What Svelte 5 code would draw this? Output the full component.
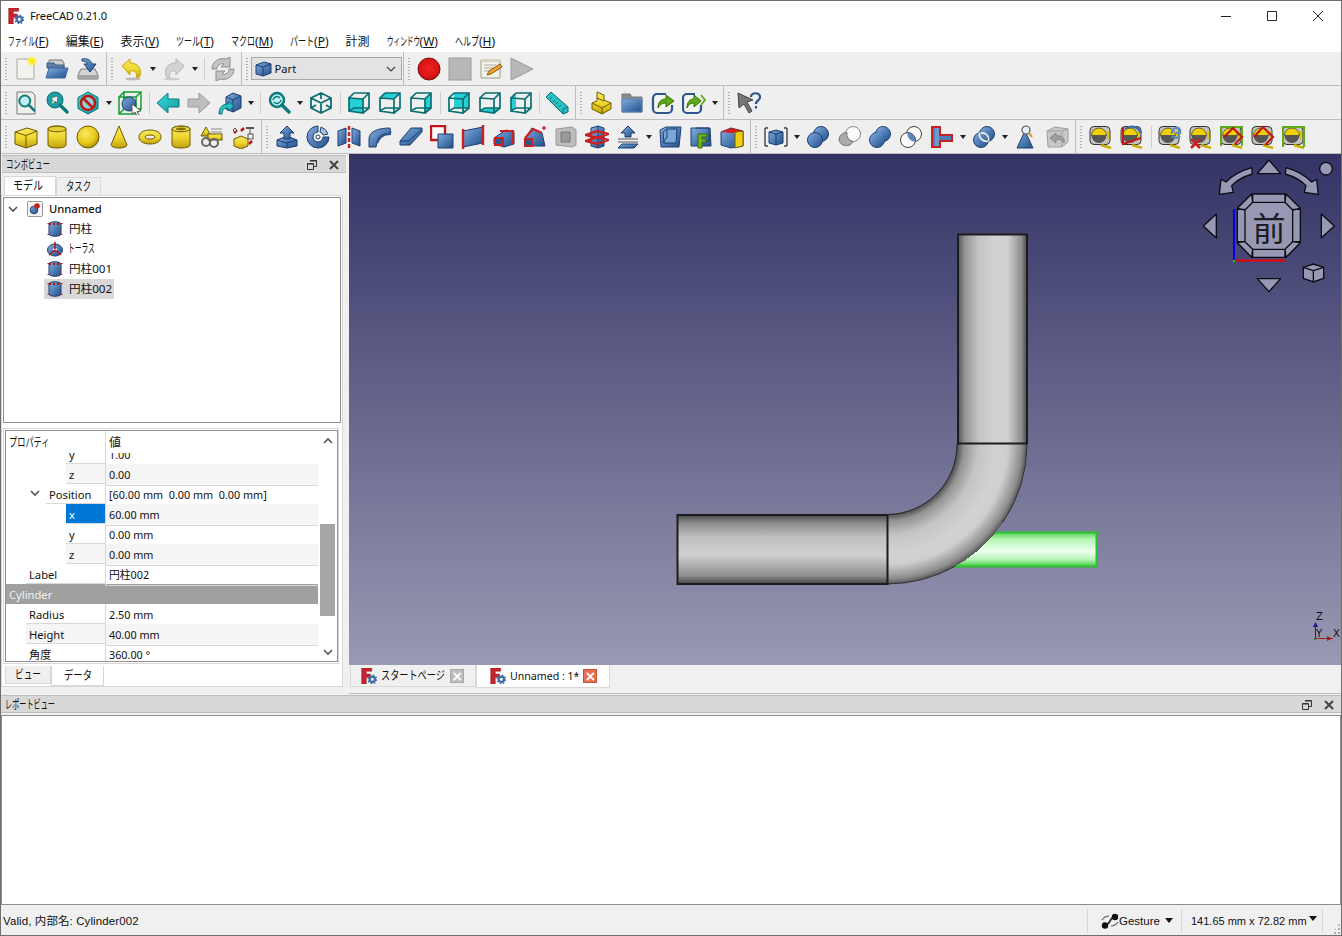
<script>
	// shared paint strings for the toolbar icons
	const ys = 'fill="url(#gy)" stroke="#6e5c00"';
	const bs = 'fill="url(#gb)" stroke="#1d3f72"';

	const logo = '<path d="M1 0h15v5H8v4h6v5H8v10H1z" fill="#c8232c" stroke="#7a1015" stroke-width=".6"/><circle cx="17" cy="17" r="4" fill="none" stroke="#3d6ea8" stroke-width="3.400"/><circle cx="17" cy="17" r="6.400" fill="none" stroke="#3d6ea8" stroke-width="2" stroke-dasharray="2.400 2.600"/>';

	const wire = (face) => `${face ? `<path d="${face}" fill="#26d0d4"/>` : ''}<path d="M2 7l14 1v14L2 20zM7 2h15v15l-6 5M2 7l5-5M16 8l6-6M2 20l5-3h15" fill="none" stroke="#0b6e70" stroke-width="1.700"/>`;
	const mag = '<circle cx="10" cy="9" r="7" fill="#bfeef0" stroke="#0b7a7e" stroke-width="2.400"/><path d="M15 14l7 7" stroke="#0b7a7e" stroke-width="3.400" stroke-linecap="round"/>';
	const tape = '<rect x="1" y="1.500" width="20" height="18" rx="4" fill="#c4c4bc" stroke="#333"/><path d="M2.500 10.500a7.500 7.500 0 0 1 15 0z" fill="#f0d000" stroke="#333" stroke-width=".7"/><path d="M2.500 10.500a7.500 7.500 0 0 0 15 0z" fill="#555"/><rect x="18" y="6" width="2" height="8" fill="#e3c400"/><path d="M12 20l10 3" stroke="#c9ad00" stroke-width="2.400"/>';
	const spheres = (a, b) => `<circle cx="15" cy="9" r="7.500" ${a}/><circle cx="9" cy="15" r="7.500" ${b}/>`;

	const icons = {
		new: '<path d="M3 2h17v20H3z" fill="#f2f2ee" stroke="#a8a8a0"/><circle cx="18" cy="4" r="4.600" fill="#fff34a" opacity=".75"/><circle cx="18" cy="4" r="2.600" fill="#ffe81a"/>',
		open: '<path d="M4 3h13l2 3v6H4z" fill="#cfcfcf" stroke="#777"/><path d="M2 6h7l2 2h8v3H2z" fill="#5c7ea8" stroke="#3e5e86"/><path d="M4 11h19l-3 10H1z" fill="url(#gb)" stroke="#39679f"/>',
		save: '<path d="M5 12L2 18v4h20v-4l-3-6z" fill="#d4d4d4" stroke="#777"/><rect x="3" y="18" width="18" height="3" fill="#a4a4a4"/><path d="M6 2c5-1 9 1 10 5h4l-6 8-6-8h4c-1-2-3-3-6-3z" fill="url(#gb)" stroke="#1d3f72"/>',
		undo: '<path d="M2 9l8-7v4c7 0 12 4 10 13-1 2-3 3-4 3 2-6-1-9-6-8v4z" fill="url(#gy)" stroke="#c9a600"/><ellipse cx="13" cy="22" rx="8" ry="1.400" fill="#bbb"/>',
		redo: '<path d="M22 9l-8-7v4C7 6 2 10 4 19c1 2 3 3 4 3-2-6 1-9 6-8v4z" fill="#d4d4d4" stroke="#b4b4b4"/><ellipse cx="10" cy="22" rx="8" ry="1.400" fill="#ccc"/>',
		refresh: '<path d="M1 12C1 5 8 0 15 2l4-2v10h-9l3-3c-4-1-7 1-7 5zM23 12c0 7-7 12-14 10l-4 2V14h9l-3 3c4 1 7-1 7-5z" fill="#c4c4c4" stroke="#8c8c8c"/>',
		record: '<circle cx="12" cy="12" r="11" fill="url(#gr)" stroke="#7d1010"/>',
		stop: '<rect x="1" y="1" width="22" height="22" fill="#b8b8b8" stroke="#9a9a9a"/>',
		macro: '<path d="M2 3h19v18H2z" fill="#f4f2e2" stroke="#999"/><path d="M2 2h19v3H2z" fill="#d8d4c0"/><path d="M5 8h12M5 11h10M5 14h7" stroke="#aaa"/><path d="M8 18l2-4 11-7 2 3-11 7z" fill="#f0a030" stroke="#8a5a10"/>',
		play: '<path d="M1 1l22 11L1 23z" fill="#b8b8b8" stroke="#999"/>',

		fitall: `<path d="M3 1h15l3 3v19H3z" fill="#f0f0ea" stroke="#777"/><g transform="translate(3 3) scale(.78)">${mag}</g>`,
		fitsel: `<circle cx="10" cy="9" r="8" fill="#1a9ea3" stroke="#0b6e70"/><path d="M15 14l7 7" stroke="#0b7a7e" stroke-width="3.400" stroke-linecap="round"/><path d="M13 5L6 7l2 2-2 3 2 1 2-3 2 2z" fill="#eee" stroke="#555" stroke-width=".6"/>`,
		draw: '<path d="M12 1l10 5.500v11L12 23 2 17.500v-11z" fill="url(#gt)" stroke="#0b6e70"/><circle cx="12" cy="12" r="7" fill="#8fd0d4" stroke="#c01818" stroke-width="2.600"/><path d="M7 7l10 10" stroke="#c01818" stroke-width="2.600"/>',
		bbox: '<path d="M1 6h17v17H1zM6 1h17v17H6zM1 6l5-5M18 6l5-5M18 23l5-5M1 23l5-5" fill="none" stroke="#15a030" stroke-width="1.500"/><circle cx="11" cy="13" r="7" fill="url(#gb)" stroke="#1d3f72"/><path d="M14 13l9 7-4 .5 2 3.500-2 .5-2-3.500-3 2z" fill="#fff" stroke="#444" stroke-width=".8"/>',
		back: '<path d="M1 12l11-10v6h11v8H12v6z" fill="url(#gt)" stroke="#0b7a7e"/>',
		fwd: '<path d="M23 12L12 2v6H1v8h11v6z" fill="#bdbdbd" stroke="#9a9a9a"/>',
		sync: '<path d="M8 6l7-4 8 3v12l-8 4-7-3z" fill="url(#gb)" stroke="#1d3f72"/><path d="M8 6l7 3 8-4M15 9v12" fill="none" stroke="#1d3f72"/><path d="M1 23c0-7 4-10 9-10V10l6 5-6 5v-3c-4 0-6 2-6 6z" fill="#28c0c4" stroke="#0b6e70"/>',
		zoomrot: `${mag}<path d="M6 9a4 4 0 0 1 7-2M14 9a4 4 0 0 1-7 2" fill="none" stroke="#0b7a7e" stroke-width="1.500"/>`,
		iso: '<path d="M12 2l10 5v10l-10 5-10-5V7zM2 7l10 5 10-5M12 12v10M12 2v6M2 17l5-3M22 17l-5-3" fill="none" stroke="#0b6e70" stroke-width="1.800"/>',
		vfront: wire('M2 7l14 1v14L2 20z'),
		vtop: wire('M2 7l5-5h15l-6 6z'),
		vright: wire('M16 8l6-6v15l-6 5z'),
		vrear: wire('M7 2h15v15H7z'),
		vbottom: wire('M2 20l5-3h15l-6 5z'),
		vleft: wire('M2 7l5-5v15l-5 3z'),
		ruler: '<path d="M1 6l5-5 17 15v5l-5 2z" fill="#28c0c4" stroke="#0b6e70"/><path d="M7 6l-2 2M10 9l-2 2M13 11l-2 2M16 14l-2 2" stroke="#0b6e70"/><path d="M18 23v-5l5-2" fill="none" stroke="#0b6e70"/>',
		pstep: '<path d="M8 1l7 3v5l7 3v6l-9 5-10-5v-6l5-2z" fill="url(#gy)" stroke="#6e5c00"/><path d="M3 12l10 5 9-5M13 17v6M8 7l7 3" fill="none" stroke="#6e5c00"/>',
		folder: '<path d="M2 3h8l2 3h10v15H2z" fill="#8d8d8d" stroke="#777"/><path d="M2 8h20v13H2z" fill="url(#gb)" stroke="#5c84b8"/>',
		link: '<path d="M15 3H6a4 4 0 0 0-4 4v11a4 4 0 0 0 4 4h11a4 4 0 0 0 4-4v-4" fill="#f4f4f4" stroke="#2c568e" stroke-width="2.200"/><path d="M7 17c0-6 3-9 8-9V4l8 6-8 6v-4c-3 0-6 1-8 5z" fill="#5eaa18" stroke="#356b08"/>',
		linksub: '<path d="M13 3H5a4 4 0 0 0-4 4v11a4 4 0 0 0 4 4h10a4 4 0 0 0 4-4v-4" fill="#f4f4f4" stroke="#2c568e" stroke-width="2.200"/><path d="M5 17c0-6 3-9 7-9V4l7 6-7 6v-4c-3 0-5 1-7 5z" fill="#5eaa18" stroke="#356b08"/><path d="M19 4l4 5-4 5" fill="none" stroke="#5eaa18" stroke-width="1.800"/>',
		help: '<path d="M1 2l15 7-6 2 5 9-3 2-5-9-5 4z" fill="#777" stroke="#444"/><path d="M14 6c0-5 9-5 9 0 0 4-4 3-4 7M19 15v2.500" fill="none" stroke="#2c568e" stroke-width="2.200"/>',

		box: `<path ${ys} d="M1 7l12-4 10 3v13l-11 4-11-4z"/><path d="M1 7l11 3.500L23 6M12 10.500V23" fill="none" stroke="#6e5c00"/>`,
		cyl: `<path ${ys} d="M3 4c0-4 18-4 18 0v16c0 4-18 4-18 0z"/><ellipse cx="12" cy="4" rx="9" ry="2.800" fill="#e8d030" stroke="#6e5c00"/>`,
		sphere: '<circle cx="12" cy="12" r="11" fill="url(#gs)" stroke="#6e5c00"/>',
		cone: '<path d="M12 1l8 19c-1 4-15 4-16 0z" fill="url(#gy)" stroke="#6e5c00"/>',
		torus: '<path fill-rule="evenodd" d="M12 5c7 0 11 3 11 7s-4 7-11 7-11-3-11-7 4-7 11-7zM12 10c-3 0-5 1-5 2s2 2 5 2 5-1 5-2-2-2-5-2z" fill="url(#gy)" stroke="#6e5c00"/>',
		tube: `<path ${ys} d="M3 4c0-4 18-4 18 0v16c0 4-18 4-18 0z"/><ellipse cx="12" cy="4" rx="9" ry="2.800" fill="#f0dc50" stroke="#6e5c00"/><ellipse cx="12" cy="4" rx="5" ry="1.400" fill="#8a7400"/>`,
		prims: '<path d="M6 2l5 9H1z" fill="url(#gy)" stroke="#6e5c00"/><path d="M11 4h11M11 7h11" stroke="#888"/><rect x="8" y="9" width="14" height="6" fill="url(#gy)" stroke="#6e5c00"/><circle cx="6" cy="17" r="4" fill="none" stroke="#666" stroke-width="2"/><circle cx="14" cy="18" r="4" fill="none" stroke="#666" stroke-width="2"/>',
		builder: '<path d="M3 14l7-3 7 3v7l-7 3-7-3z" fill="url(#gy)" stroke="#6e5c00"/><rect x="15" y="2" width="8" height="2" fill="#555"/><rect x="17" y="9" width="5" height="5" fill="#eee" stroke="#555"/><path d="M19 4v5" stroke="#555"/><path d="M3 8l3-3M13 3l-3 3M21 16l-3 3" stroke="#c01818" stroke-width="2.600"/><path d="M4 3l2 2-2 2-2-2z" fill="#ddd" stroke="#555"/>',
		extrude: `<path ${bs} d="M2 15l10-4 10 4v6l-10 2-10-2z"/><path d="M2 15l10 3 10-3M12 18v5" fill="none" stroke="#1d3f72"/><path ${bs} d="M12 1l7 7h-4v6H9V8H5z"/>`,
		revolve: '<path d="M12 1a11 11 0 1 0 11 11h-6a5 5 0 1 1-5-5z" fill="url(#gb)" stroke="#1d3f72"/><path d="M15 2a11 11 0 0 1 7 7l-5 1a5 5 0 0 0-3-3z" fill="#a8c0dc" stroke="#1d3f72"/><circle cx="12" cy="12" r="2" fill="#fff" stroke="#1d3f72"/>',
		mirror: `<path ${bs} d="M1 6l8-3v15l-8 3z"/><path ${bs} d="M23 6l-8-3v15l8 3z"/><path d="M12 1v22" stroke="#cc1f1f" stroke-width="2.400" stroke-dasharray="4 2"/>`,
		fillet: `<path ${bs} d="M1 22V13C2 6 11 3 22 3l1 5c-8 0-13 3-14 9l-1 5z"/><path d="M23 8v2c-7 0-11 3-13 9l-1-2c1-6 6-9 14-9z" fill="#2c568e"/>`,
		chamfer: `<path ${bs} d="M1 16L12 3h11v4L11 20H1z"/><path d="M1 16h9l13-12" fill="none" stroke="#1d3f72"/>`,
		face: '<path d="M1 1h14v14H1z" fill="#fff" stroke="#c01818" stroke-width="2.400"/><path d="M8 9h15v14H8z" fill="url(#gb)" stroke="#1d3f72"/>',
		ruled: `<path ${bs} d="M2 6l20-4v16L2 22z"/><path d="M2 4v20M22 0v20" stroke="#cc1f1f" stroke-width="2.400"/>`,
		loft: `<path ${bs} d="M2 13l12-8 8 2v12l-10 3-10-3z"/><path d="M8 6h13v13" fill="none" stroke="#cc1f1f" stroke-width="2.200"/><path d="M3 13h8v7H3z" fill="#2c568e" stroke="#cc1f1f" stroke-width="2"/>`,
		sweep: `<path ${bs} d="M1 15L9 3l10 5 3 13H8z"/><path d="M2 13l8-9 9 4" fill="none" stroke="#cc1f1f" stroke-width="2"/><path d="M2 14h7v7H2z" fill="#2c568e" stroke="#cc1f1f" stroke-width="2"/><circle cx="21" cy="3" r="1.800" fill="#cc1f1f"/>`,
		offset: '<path d="M2 4l16-2 4 3v15l-4 2-16-2z" fill="#bdbdbd" stroke="#999"/><path d="M7 7h9v10H7z" fill="#999" stroke="#777"/>',
		section: `<path ${bs} d="M6 3l7-2 6 2v18l-6 2-7-2z"/><path d="M13 1v22" stroke="#1d3f72"/><path d="M1 10l11-4 11 3-11 4zM1 16l11-4 11 3-11 4z" fill="none" stroke="#cc1f1f" stroke-width="2.400"/>`,
		xsect: `<path ${bs} d="M12 1l7 7h-4v4H9V8H5z"/><path d="M2 14h20M2 17h20" stroke="#555"/><path ${bs} d="M6 19h16l-4 4H2z"/>`,
		thick: `<path ${bs} d="M2 5l6-3h15l-2 20H3z"/><path d="M5 7l4-3h10l-1 14H6z" fill="#7aa6d8" stroke="#1d3f72"/><path d="M5 18l4-6V4" fill="none" stroke="#1d3f72"/>`,
		offs2d: `<path ${bs} d="M2 3h19l1 18H2z"/><path d="M7 3h13v13h-5" fill="none" stroke="#1d3f72"/><path d="M9 9h9v3h-5v2h4v3h-4v6H9z" fill="#6fb520" stroke="#3a6e08"/>`,
		color: '<path d="M1 7l10-4 12 3v15l-12 2-10-3z" fill="url(#gb)" stroke="#1d3f72"/><path d="M1 7l10-4 12 3-11 2z" fill="#dd1c1c"/><path d="M15 7l8-1v15l-8 2z" fill="#f0cf10" stroke="#6e5c00"/>',
		compound: '<path d="M1 3h3M1 3v18M1 21h3M23 3h-3M23 3v18M23 21h-3" fill="none" stroke="#444" stroke-width="1.400"/><path d="M5 7l7-2 7 2v11l-7 2-7-2z" fill="url(#gb)" stroke="#1d3f72"/><path d="M5 7l7 2 7-2M12 9v11" fill="none" stroke="#1d3f72"/>',
		boolean: spheres(bs, bs),
		cut: '<circle cx="16" cy="9" r="7.500" fill="#fafafa" stroke="#888"/><path d="M2 15a7.500 7.500 0 0 1 8-7.500A7.500 7.500 0 0 0 16 16.500 7.500 7.500 0 0 1 2 15z" fill="#aaa" stroke="#777"/>',
		fuse: `${spheres(bs, bs)}<circle cx="15" cy="9" r="6.800" fill="url(#gb)"/><circle cx="9" cy="15" r="6.800" fill="url(#gb)"/>`,
		common: `<circle cx="15" cy="9" r="7.500" fill="#fafafa" stroke="#444"/><circle cx="9" cy="15" r="7.500" fill="#fafafa" stroke="#444"/><path d="M8.500 7.600a7.500 7.500 0 0 1 7.900 8.900 7.500 7.500 0 0 1-7.900-8.900z" fill="#5c86bc"/>`,
		join: '<path d="M1 1h10v8h12v8H11v6H1z" fill="#cc1f1f"/><path d="M3 3h6v8h12v4H9v6H3z" fill="#4f7db6"/><path d="M5 3h4v18H5z" fill="#6f9bd0"/>',
		split: `${spheres(bs, bs)}<path d="M8.500 8c5-1 9 3 8 8" fill="none" stroke="#f4f4f4" stroke-width="1.600"/><path d="M7.500 7.700c-1 5 3 9.300 8.800 8.800" fill="none" stroke="#f4f4f4" stroke-width="1.600"/>`,
		check: '<path d="M11 6L3 23h16z" fill="url(#gb)" stroke="#1d3f72"/><circle cx="12" cy="5" r="4" fill="#e8f0f8" stroke="#555" stroke-width="1.200"/><path d="M15 8l3 4" stroke="#d0a040" stroke-width="2.400"/>',
		defeat: '<path d="M2 6l8-4 13 2v13l-6 5H3z" fill="#c8c8c8" stroke="#a0a0a0"/><path d="M2 6h15v15M17 6l6-2" fill="none" stroke="#a0a0a0"/><path d="M5 13l6-5v3c6-1 9 2 8 7-1-3-4-4-8-3v3z" fill="#a0a0a0" stroke="#888"/>',
		m1: tape,
		m2: `${tape}<path d="M3 2v17l18-6" fill="none" stroke="#c01818" stroke-width="2"/><path d="M5 4c6-4 13-3 16 4" fill="none" stroke="#3d6ea8" stroke-width="2.400"/>`,
		m3: `${tape}<path d="M14 9a5 5 0 0 1 8-5M22 4v4h-4M14 11a5 5 0 0 0 8 0" fill="none" stroke="#5c8cc8" stroke-width="2.200"/>`,
		m4: `${tape}<path d="M2 14l9 9M11 14l-9 9" stroke="#cc1f1f" stroke-width="2.600"/>`,
		m5: `${tape}<path d="M1 21V2h21v19" fill="none" stroke="#5eaa18" stroke-width="2"/><path d="M4 12l9-9 9 9-7 7" fill="none" stroke="#c01818" stroke-width="2.200"/>`,
		m6: `${tape}<path d="M3 12l9-10 10 10-8 8" fill="none" stroke="#c01818" stroke-width="2.200"/>`,
		m7: `${tape}<path d="M1 22V2h21v20" fill="none" stroke="#5eaa18" stroke-width="2.200"/>`,

		part: '<path d="M1 5l8-3 7 2v9l-8 3-7-2z" fill="url(#gb)" stroke="#1d3f72"/><path d="M1 5l7 2 8-3M8 7v9" fill="none" stroke="#1d3f72"/>',
		doc: '<rect x=".5" y=".5" width="15" height="15" rx="1" fill="#f4f4f4" stroke="#999"/><circle cx="7" cy="9" r="3.800" fill="url(#gb)" stroke="#1d3f72"/><circle cx="10" cy="5" r="2.800" fill="#cc1f1f"/>',
		tcyl: '<path d="M2 3c0-3 12-3 12 0v10c0 3-12 3-12 0z" fill="url(#gb)" stroke="#1d3f72"/><path d="M2 3h12" stroke="#a01818" stroke-width="2" stroke-dasharray="2 2"/><path d="M1.500 2v1M14.500 2v1M1.500 13v1M14.500 13v1" stroke="#c01818" stroke-width="2"/>',
		ttorus: '<ellipse cx="8" cy="9" rx="7.500" ry="6" fill="url(#gb)" stroke="#1d3f72"/><ellipse cx="8" cy="8.500" rx="2.400" ry="1.600" fill="#e8e8e8"/><path d="M8 1v7M8 9l-6 5M8 9l6 5" stroke="#b01818" stroke-width="1.600"/>',
		logo
	};

	// toolbars: name = 31px button, v = drop arrow, | = separator
	const rows = [
		[
			['new', 'open', 'save'],
			['undo', 'v', 'redo', 'v', '|', 'refresh'],
			['combo'],
			['record', 'stop', 'macro', 'play']
		],
		[
			['fitall', 'fitsel', 'draw', 'v', 'bbox', '|', 'back', 'fwd', 'sync', 'v', '|', 'zoomrot', 'v', 'iso', '|', 'vfront', 'vtop', 'vright', '|', 'vrear', 'vbottom', 'vleft', '/', 'ruler'],
			['pstep', 'folder', 'link', 'linksub', 'v'],
			['help']
		],
		[
			['box', 'cyl', 'sphere', 'cone', 'torus', 'tube', 'prims', 'builder'],
			['extrude', 'revolve', 'mirror', 'fillet', 'chamfer', 'face', 'ruled', 'loft', 'sweep', 'offset', 'section', 'xsect', 'v', 'thick', 'offs2d', 'color'],
			['compound', 'v', 'boolean', 'cut', 'fuse', 'common', 'join', 'v', 'split', 'v', 'check', 'defeat'],
			['m1', 'm2', '|', 'm3', 'm4', 'm5', 'm6', 'm7']
		]
	];

	// label, squeezed width of the kana (0 = kanji, left as is), accelerator
	const menus = [
		['ファイル', 27, 'F'], ['編集', 0, 'E'], ['表示', 0, 'V'], ['ツール', 24, 'T'], ['マクロ', 24, 'M'],
		['パート', 24, 'P'], ['計測', 0, ''], ['ウィンドウ', 33, 'W'], ['ヘルプ', 24, 'H']
	];

	const tree = [
		{ icon: 'tcyl', label: '円柱' },
		{ icon: 'ttorus', kana: 'トーラス', w: 27 },
		{ icon: 'tcyl', label: '円柱001' },
		{ icon: 'tcyl', label: '円柱002', sel: true }
	];

	// depth: 0 group, 1 = top level, 2 = child, 3 = grandchild
	const props = [
		{ name: 'y', value: '1.00', depth: 3, alt: false },
		{ name: 'z', value: '0.00', depth: 3, alt: true },
		{ name: 'Position', value: '[60.00 mm  0.00 mm  0.00 mm]', depth: 2, open: true },
		{ name: 'x', value: '60.00 mm', depth: 3, alt: true, sel: true },
		{ name: 'y', value: '0.00 mm', depth: 3 },
		{ name: 'z', value: '0.00 mm', depth: 3, alt: true },
		{ name: 'Label', value: '円柱002', depth: 1 },
		{ name: 'Cylinder', depth: 0 },
		{ name: 'Radius', value: '2.50 mm', depth: 1 },
		{ name: 'Height', value: '40.00 mm', depth: 1, alt: true },
		{ name: '角度', value: '360.00 °', depth: 1 }
	];
</script>

{#snippet icon(name, size = 24, box = 24)}
	<svg class="ico" width={size} height={size} viewBox="0 0 {box} {box}">{@html icons[name]}</svg>
{/snippet}

{#snippet nk(text, w)}
	<span class="nk" style="width:{w}px"><span class="nk-in" style="transform:scaleX({w / (text.length * 12)})">{text}</span></span>
{/snippet}

{#snippet dockButtons()}
	<span class="dockbtns">
		<svg width="10" height="10" viewBox="0 0 10 10"><path d="M3 .5h6.500v6H7M.5 3.500h6v6h-6z" fill="none" stroke="#333" /><path d="M3 1h6.500M.5 4h6" stroke="#333" /></svg>
		<svg width="10" height="10" viewBox="0 0 10 10"><path d="M1 1l8 8M9 1l-8 8" stroke="#444" stroke-width="2" /></svg>
	</span>
{/snippet}

<svg class="defs" width="0" height="0">
	<defs>
		<linearGradient id="gy" x1="0" y1="0" x2="0" y2="1"><stop offset="0" stop-color="#f6e860" /><stop offset=".5" stop-color="#f0d830" /><stop offset="1" stop-color="#c0a010" /></linearGradient>
		<radialGradient id="gs" cx=".4" cy=".35" r=".75"><stop offset="0" stop-color="#f8ea60" /><stop offset=".6" stop-color="#e8c818" /><stop offset="1" stop-color="#907800" /></radialGradient>
		<linearGradient id="gb" x1="0" y1="0" x2="1" y2="1"><stop offset="0" stop-color="#86aedd" /><stop offset=".5" stop-color="#4f7db6" /><stop offset="1" stop-color="#264f86" /></linearGradient>
		<linearGradient id="gt" x1="0" y1="0" x2="1" y2="1"><stop offset="0" stop-color="#38dcdf" /><stop offset="1" stop-color="#139a9e" /></linearGradient>
		<radialGradient id="gr" cx=".5" cy=".45" r=".6"><stop offset="0" stop-color="#ee2020" /><stop offset=".7" stop-color="#dc1414" /><stop offset="1" stop-color="#901010" /></radialGradient>
	</defs>
</svg>

<div class="window">
	<header class="titlebar">
		<span class="applogo">{@render icon('logo', 16)}</span>
		<span class="apptitle">FreeCAD 0.21.0</span>
		<div class="winbtns">
			<span><svg width="12" height="12" viewBox="0 0 12 12"><path d="M1 6.500h10" stroke="#222" /></svg></span>
			<span><svg width="12" height="12" viewBox="0 0 12 12"><path d="M1.500 1.500h9v9h-9z" fill="none" stroke="#222" /></svg></span>
			<span><svg width="12" height="12" viewBox="0 0 12 12"><path d="M1 1l10 10M11 1L1 11" stroke="#222" /></svg></span>
		</div>
	</header>

	<nav class="menubar">
		{#each menus as [label, w, key]}
			<span class="menu">{#if w}{@render nk(label, w)}{:else}{label}{/if}{#if key}(<u>{key}</u>){/if}</span>
		{/each}
	</nav>

	{#each rows as row}
		<div class="toolrow">
			{#each row as bar}
				<div class="bar" class:hascombo={bar[0] === 'combo'}>
					{#each bar as item}
						{#if item === 'v'}
							<span class="drop"></span>
						{:else if item === '|'}
							<span class="sep"></span>
						{:else if item === '/'}
							<span class="sep narrow"></span>
						{:else if item === 'combo'}
							<div class="combo">
								{@render icon('part', 17, 17)}
								<span>Part</span>
								<svg class="chev" width="10" height="6" viewBox="0 0 10 6"><path d="M1 1l4 4 4-4" fill="none" stroke="#444" stroke-width="1.200" /></svg>
							</div>
						{:else}
							<span class="btn">{@render icon(item)}</span>
						{/if}
					{/each}
				</div>
			{/each}
		</div>
	{/each}

	<div class="main">
		<aside class="combo-view">
			<div class="docktitle"><span>{@render nk('コンボビュー', 44)}</span>{@render dockButtons()}</div>
			<div class="tabs top">
				<span class="tab on">{@render nk('モデル', 30)}</span>
				<span class="tab">{@render nk('タスク', 25)}</span>
			</div>
			<div class="pane">
				<div class="tree">
					<div class="node root">
						<svg class="arrow" width="10" height="7" viewBox="0 0 10 7"><path d="M1 1l4 4 4-4" fill="none" stroke="#555" stroke-width="1.600" /></svg>
						{@render icon('doc', 16, 16)}
						<b>Unnamed</b>
					</div>
					{#each tree as n}
						<div class="node leaf" class:picked={n.sel}>
							{@render icon(n.icon, 16, 16)}
							{#if n.kana}
								<span class="tight">{@render nk(n.kana, n.w)}</span>
							{:else}
								<span>{n.label}</span>
							{/if}
						</div>
					{/each}
				</div>
				<div class="propframe">
					<div class="props">
						<div class="table">
							<div class="thead"><span>{@render nk('プロパティ', 41)}</span><span>値</span></div>
							<div class="tbody">
								{#each props as p}
									{#if p.depth === 0}
										<div class="prow group">{p.name}</div>
									{:else}
										<div class="prow" class:alt={p.alt}>
											<div class="pname d{p.depth}" class:sel={p.sel}>
												{#if p.open}<svg width="10" height="7" viewBox="0 0 10 7"><path d="M1 1l4 4 4-4" fill="none" stroke="#555" stroke-width="1.600" /></svg>{/if}
												<span>{p.name}</span>
											</div>
											<div class="pval">{p.value}</div>
										</div>
									{/if}
								{/each}
							</div>
						</div>
						<div class="scroll">
							<svg width="10" height="7" viewBox="0 0 10 7"><path d="M1 6l4-4 4 4" fill="none" stroke="#555" stroke-width="1.600" /></svg>
							<div class="track"><div class="thumb"></div></div>
							<svg width="10" height="7" viewBox="0 0 10 7"><path d="M1 1l4 4 4-4" fill="none" stroke="#555" stroke-width="1.600" /></svg>
						</div>
					</div>
				</div>
				<div class="tabs bottom">
					<span class="tab">{@render nk('ビュー', 26)}</span>
					<span class="tab on">{@render nk('データ', 28)}</span>
				</div>
			</div>
		</aside>

		<section class="viewer">
			<svg class="scene" viewBox="349 154 992 511" width="992" height="511">
				<defs>
					<linearGradient id="bgv" x1="0" y1="0" x2="0" y2="1"><stop offset="0" stop-color="#333366" /><stop offset="1" stop-color="#9999b3" /></linearGradient>
					<linearGradient id="cylh" x1="0" y1="0" x2="0" y2="1">
						<stop offset="0" stop-color="#4c4c4c" /><stop offset=".12" stop-color="#8e8e8e" /><stop offset=".32" stop-color="#c0c0c0" /><stop offset=".58" stop-color="#d0d0d0" /><stop offset=".88" stop-color="#8e8e8e" /><stop offset="1" stop-color="#454545" />
					</linearGradient>
					<linearGradient id="cylv" x1="0" y1="0" x2="1" y2="0">
						<stop offset="0" stop-color="#555" /><stop offset=".1" stop-color="#939393" /><stop offset=".3" stop-color="#c4c4c4" /><stop offset=".55" stop-color="#d2d2d2" /><stop offset=".72" stop-color="#cfcfcf" /><stop offset=".92" stop-color="#8e8e8e" /><stop offset="1" stop-color="#484848" />
					</linearGradient>
					<radialGradient id="elbow" gradientUnits="userSpaceOnUse" cx="887" cy="444" r="140">
						<stop offset=".5" stop-color="#4c4c4c" /><stop offset=".55" stop-color="#939393" /><stop offset=".65" stop-color="#c4c4c4" /><stop offset=".78" stop-color="#d2d2d2" /><stop offset=".86" stop-color="#cfcfcf" /><stop offset=".96" stop-color="#8e8e8e" /><stop offset="1" stop-color="#555" />
					</radialGradient>
					<linearGradient id="green" x1="0" y1="0" x2="0" y2="1">
						<stop offset="0" stop-color="#52d452" /><stop offset=".2" stop-color="#b4f4b4" /><stop offset=".55" stop-color="#eeffee" /><stop offset=".8" stop-color="#b4f4b4" /><stop offset="1" stop-color="#40cc40" />
					</linearGradient>
				</defs>
				<rect x="349" y="154" width="992" height="511" fill="url(#bgv)" />

				<rect x="940" y="532.500" width="156.500" height="34" fill="url(#green)" stroke="#2fc02f" stroke-width="2" />
				<rect x="1096" y="531" width="2.500" height="2.500" fill="#2fc02f" />

				<path d="M887 514.500A70 70 0 0 0 957 444H1027A140 140 0 0 1 887 584z" fill="url(#elbow)" shape-rendering="crispEdges" />
				<path d="M887 514.500A70 70 0 0 0 957 444" fill="none" stroke="#222" />
				<path d="M1027 444A140 140 0 0 1 1003 522M955.500 566A140 140 0 0 1 887 584" fill="none" stroke="#333" />
				<rect x="958" y="234.500" width="69" height="209" fill="url(#cylv)" stroke="#1c1c1c" stroke-width="2" />
				<rect x="677.500" y="515" width="210" height="69" fill="url(#cylh)" stroke="#1c1c1c" stroke-width="2" />

				<g transform="translate(1190 150) scale(.33333)" fill="#9698b4" stroke="#0c0c14" stroke-width="4" stroke-linejoin="round">
					<path d="M237 30l35 41h-70z" />
					<path d="M202 386h70l-35 39z" />
					<path d="M40 228l39-36v72z" />
					<path d="M433 228l-39-36v72z" />
					<path id="turnl" d="M185 53l2 19c-27 8-47 19-62 35l5 20-42 6 5-45 15 8c18-19 46-34 77-43z" />
					<use href="#turnl" transform="translate(473 0) scale(-1 1)" />
					<circle cx="408" cy="56" r="19" />
					<path d="M340 352l30-10 31 10v33l-31 11-30-11z" />
					<path d="M340 352l30 10 31-10M370 362v34" fill="none" />
					<path d="M185 132h103l43 43v103l-43 44H185l-43-44V175z" />
					<path d="M188 157h97l23 23v95l-23 23h-97l-23-23v-95z" />
					<path d="M185 132l3 25M288 132l-3 25M331 175l-23 5M331 278l-23-3M288 322l-3-24M185 322l3-24M142 278l23-3M142 175l23 5M188 132v25M285 132v25M142 178h23M142 275h23M308 178h23M308 275h23M188 298v24M285 298v24" fill="none" />
				</g>
				<text class="cubelabel" x="1269" y="241" text-anchor="middle">前</text>
				<path d="M1234 209v51" stroke="#0000ee" stroke-width="2" />
				<path d="M1235 260.500h51" stroke="#ee0000" stroke-width="2" />
				<rect x="1233" y="260" width="2" height="2" fill="#00e000" />

				<path d="M1315.500 639v-16" stroke="#1a1a90" />
				<path d="M1313 627l2.500-5 2.500 5z" fill="#1a1a90" />
				<path d="M1315 638.500h18" stroke="#a01c1c" />
				<path d="M1327 636l5 2.500-5 2.500z" fill="#a01c1c" />
				<rect x="1314" y="638" width="2" height="2" fill="#208020" />
				<text class="axis" x="1316" y="620">Z</text>
				<text class="axis" x="1316" y="637">Y</text>
				<text class="axis" x="1333" y="637">X</text>
			</svg>
			<div class="doctabs">
				<div class="doctab">
					{@render icon('logo', 16)}
					<span class="label">{@render nk('スタートページ', 64)}</span>
					<span class="xbox grey">×</span>
				</div>
				<div class="doctab on">
					{@render icon('logo', 16)}
					<span class="label">Unnamed : 1*</span>
					<span class="xbox orange">×</span>
				</div>
			</div>
		</section>
	</div>

	<div class="report">
		<div class="docktitle wide"><span>{@render nk('レポートビュー', 50)}</span>{@render dockButtons()}</div>
		<div class="reportbox"></div>
	</div>

	<footer class="status">
		<span class="msg">Valid, 内部名: Cylinder002</span>
		<div class="cell gesture">
			<svg width="18" height="16" viewBox="0 0 18 16"><path d="M4 12c6 0 4-8 10-8" fill="none" stroke="#333" stroke-width="1.800" /><circle cx="14" cy="4" r="3.200" fill="#111" /><circle cx="4" cy="12.500" r="3.200" fill="#111" /><path d="M1 7c2-3 4-4 7-4M17 9c-2 3-4 4-7 4" fill="none" stroke="#555" stroke-width="1.200" /></svg>
			<span>Gesture</span>
			<i class="tri"></i>
		</div>
		<div class="cell size"><span>141.65 mm x 72.82 mm</span><i class="tri"></i></div>
		<div class="grip"></div>
	</footer>
</div>

<style>
	:global(body) {
		margin: 0;
		background: #f0f0f0;
	}

	.defs {
		position: absolute;
	}

	.window {
		box-sizing: border-box;
		width: 1342px;
		height: 936px;
		display: flex;
		flex-direction: column;
		overflow: hidden;
		border: 1px solid #6e6e6e;
		background: #f0f0f0;
		color: #111;
		font: 11.2px/16px "Noto Sans", "Noto Sans CJK JP", sans-serif;
		white-space: nowrap;
	}

	.ico {
		display: block;
		flex: none;
	}

	/* narrow kana, the CJK font only has full-width ones */
	.nk {
		display: inline-block;
		vertical-align: bottom;
		height: 16px;
	}

	.nk-in {
		display: inline-block;
		font-size: 12px;
		transform-origin: left center;
	}

	/* title + menu */
	.titlebar {
		height: 30px;
		flex: none;
		display: flex;
		align-items: center;
		background: #fff;
	}

	.applogo {
		margin-left: 7px;
	}

	.apptitle {
		margin-left: 6px;
		letter-spacing: -0.2px;
	}

	.winbtns {
		margin-left: auto;
		display: flex;
	}

	.winbtns span {
		width: 46px;
		height: 30px;
		display: flex;
		align-items: center;
		justify-content: center;
	}

	.menubar {
		height: 21px;
		flex: none;
		display: flex;
		align-items: center;
		padding-left: 7px;
		background: #fff;
		gap: 17px;
		font-size: 12px;
	}

	/* toolbars */
	.toolrow {
		height: 33px;
		flex: none;
		display: flex;
		background: #efefef;
		border-bottom: 1px solid #bdbdbd;
	}

	.bar {
		display: flex;
		align-items: center;
		padding: 0 2px 0 10px;
		border-right: 1px solid #bdbdbd;
		background: repeating-linear-gradient(#aeaeae 0 1px, transparent 1px 3px) no-repeat 4px 6px / 2px 22px;
	}

	.toolrow > .bar:first-child {
		padding-left: 9.5px;
	}

	.bar:last-child {
		border-right: none;
	}

	.bar.hascombo {
		padding: 0 1px 0 9px;
	}

	.btn {
		width: 31px;
		height: 31px;
		flex: none;
		display: flex;
		align-items: center;
		justify-content: center;
	}

	.drop {
		width: 11px;
		height: 31px;
		flex: none;
		position: relative;
	}

	.drop::after {
		content: "";
		position: absolute;
		left: 2px;
		top: 14px;
		border: 3.5px solid transparent;
		border-top: 4px solid #222;
		border-bottom: none;
	}

	.sep {
		width: 7px;
		height: 22px;
		flex: none;
		background: linear-gradient(#cfcfcf, #cfcfcf) no-repeat 3px 0 / 1px 100%;
	}

	.sep.narrow {
		width: 5px;
		background-position: 2px 0;
	}

	.combo {
		box-sizing: border-box;
		width: 151px;
		height: 23px;
		display: flex;
		align-items: center;
		gap: 3px;
		padding: 0 3px;
		border: 1px solid #a8a8a8;
		background: #e3e3e3;
	}

	.chev {
		margin-left: auto;
		margin-right: 2px;
	}

	/* main area */
	.main {
		height: 540px;
		flex: none;
		display: flex;
	}

	.combo-view {
		width: 348px;
		flex: none;
		display: flex;
		flex-direction: column;
		padding-top: 1px;
	}

	.docktitle {
		box-sizing: border-box;
		height: 18px;
		flex: none;
		display: flex;
		align-items: center;
		padding: 1px 0 0 4px;
		margin: 0 3px 0 1px;
		background: #d8d8d8;
		border-top: 1px solid #bdbdbd;
		border-bottom: 1px solid #bdbdbd;
	}

	.docktitle.wide {
		margin: 1px 0 1px 0;
	}

	.dockbtns {
		margin-left: auto;
		display: flex;
		gap: 12px;
		align-items: center;
		padding-right: 7px;
	}

	.tabs {
		display: flex;
		flex: none;
	}

	.tabs.top {
		padding: 3px 0 0 3px;
		height: 19px;
	}

	.tab {
		box-sizing: border-box;
		display: flex;
		align-items: center;
		justify-content: center;
		background: #efefef;
		border: 1px solid #d8d8d8;
		height: 18px;
	}

	.tabs.top .tab {
		width: 45px;
		margin-top: 1px;
		border-bottom: none;
		height: 18px;
	}

	.tabs.top .tab.on {
		width: 52px;
		background: #fff;
		margin-top: 0;
		height: 19px;
		position: relative;
		margin-bottom: -1px;
		padding-right: 4px;
	}

	.pane {
		box-sizing: border-box;
		width: 342px;
		height: 492px;
		background: #fff;
		border: 1px solid #d8d8d8;
		display: flex;
		flex-direction: column;
		padding: 1px 0 0 1px;
	}

	.tree {
		box-sizing: border-box;
		width: 338px;
		height: 226px;
		flex: none;
		border: 1px solid #8f8f8f;
		padding-top: 1px;
	}

	.node {
		height: 20px;
		display: flex;
		align-items: center;
	}

	.node.root {
		padding-left: 4px;
		gap: 9px;
	}

	.node.root b {
		font-weight: 500;
		margin-left: -3px;
	}

	.node.leaf {
		margin-left: 40px;
		padding-left: 3px;
		width: 67px;
		gap: 6px;
		font-size: 11.6px;
	}

	.node.leaf .tight {
		margin-left: -1px;
	}

	.node.picked {
		background: #d8d8d8;
	}

	.propframe {
		box-sizing: border-box;
		margin-top: 5px;
		width: 336px;
		height: 236px;
		flex: none;
		border: 1px solid #d8d8d8;
		padding: 1px;
	}

	.props {
		box-sizing: border-box;
		width: 333px;
		height: 232px;
		display: flex;
		border: 1px solid #8f8f8f;
		overflow: hidden;
	}

	.table {
		width: 312px;
		flex: none;
		display: flex;
		flex-direction: column;
	}

	.thead {
		height: 22px;
		flex: none;
		display: grid;
		grid-template-columns: 99px 1fr;
		background: #fff;
		position: relative;
		z-index: 1;
	}

	.thead > span {
		padding: 4px 0 0 3px;
	}

	.thead > span + span {
		border-left: 1px solid #d8d8d8;
		font-size: 12px;
	}

	.tbody {
		margin-top: -9px;
	}

	.prow {
		height: 20px;
		box-sizing: border-box;
		display: grid;
		grid-template-columns: 99px 1fr;
	}

	.prow.group {
		display: block;
		background: #a0a0a0;
		color: #f2f2f2;
		line-height: 21px;
		padding-left: 3px;
	}

	.pname {
		display: flex;
		align-items: center;
		border-bottom: 1px solid #d8d8d8;
		box-sizing: border-box;
		height: 20px;
		padding-top: 2px;
		gap: 8px;
	}

	.pname.d1 {
		margin-left: 20px;
		padding-left: 3px;
	}

	.pname.d2 {
		margin-left: 40px;
		padding-left: 3px;
		position: relative;
	}

	.pname.d2 svg {
		position: absolute;
		left: -16px;
		top: 6px;
	}

	.pname.d3 {
		margin-left: 60px;
		padding-left: 3px;
	}

	.alt .pname,
	.alt .pval {
		background: #f5f5f5;
	}

	.pname.sel {
		background: #0078d7 !important;
		color: #fff;
	}

	.pval {
		border-left: 1px solid #d8d8d8;
		border-bottom: 1px solid #d8d8d8;
		padding-left: 3px;
		line-height: 21px;
		white-space: pre;
		font-size: 10.8px;
	}

	.scroll {
		flex: 1;
		display: flex;
		flex-direction: column;
		align-items: center;
		padding-top: 6px;
		padding-bottom: 5px;
		background: #fff;
	}

	.track {
		flex: 1;
		width: 100%;
		padding-top: 80px;
	}

	.thumb {
		width: 15px;
		height: 92px;
		margin: 0 auto;
		background: #a6a6a6;
	}

	.tabs.bottom {
		padding: 2px 0 0 2px;
	}

	.tabs.bottom .tab {
		width: 46px;
		border-top: none;
	}

	.tabs.bottom .tab.on {
		width: 53px;
		background: #fff;
		height: 20px;
	}

	/* 3D view */
	.viewer {
		width: 992px;
		flex: none;
		display: flex;
		flex-direction: column;
	}

	.scene {
		display: block;
		flex: none;
	}

	.cubelabel {
		font: 33px "Noto Sans CJK JP", sans-serif;
		fill: #1c1c24;
	}

	.axis {
		font: 10px "DejaVu Sans", sans-serif;
		fill: #111;
	}

	.doctabs {
		height: 29px;
		box-sizing: border-box;
		flex: none;
		display: flex;
		padding-left: 1px;
		border-bottom: 1px solid #bdbdbd;
		align-items: flex-start;
	}

	.doctab {
		box-sizing: border-box;
		height: 22px;
		display: flex;
		align-items: center;
		gap: 4px;
		padding: 0 4px 0 10px;
		width: 126px;
		border: 1px solid #d8d8d8;
		border-top: none;
	}

	.doctab.on {
		height: 23px;
		width: 134px;
		background: #fff;
		padding-left: 13px;
		font-size: 10.6px;
	}

	.xbox {
		width: 14px;
		height: 14px;
		box-sizing: border-box;
		display: flex;
		align-items: center;
		justify-content: center;
		color: #fff;
		font: bold 14px/14px "DejaVu Sans", sans-serif;
		margin-left: 1px;
	}

	.xbox.grey {
		background: #bdbdbd;
		border: 1px solid #a8a8a8;
	}

	.xbox.orange {
		background: #e87050;
		border: 1px solid #c85030;
		margin-left: 0;
	}

	/* report view */
	.report {
		flex: 1;
		display: flex;
		flex-direction: column;
	}

	.reportbox {
		flex: 1;
		background: #fff;
		border: 1px solid #8f8f8f;
		margin-top: 1px;
	}

	.status {
		height: 30px;
		box-sizing: border-box;
		flex: none;
		display: flex;
		align-items: center;
		padding: 1px 0 0 2px;
		font-family: "Liberation Sans", "Noto Sans CJK JP", sans-serif;
		font-size: 11.5px;
	}

	.msg {
		flex: 1;
		letter-spacing: 0.1px;
	}

	.cell {
		height: 24px;
		display: flex;
		align-items: center;
		border-left: 1px solid #d8d8d8;
		box-sizing: border-box;
	}

	.gesture {
		width: 94px;
		padding-left: 13px;
		gap: 0;
	}

	.size {
		width: 142px;
		padding-left: 9px;
		font-size: 11px;
		border-right: 1px solid #d8d8d8;
	}

	.tri {
		display: inline-block;
		border: 4px solid transparent;
		border-top: 5px solid #111;
		border-bottom: none;
		margin-left: 5px;
	}

	.size .tri {
		margin-left: 2px;
		margin-top: -4px;
	}

	.grip {
		width: 18px;
		height: 28px;
		background: radial-gradient(circle, #aaa 1px, transparent 1px) right bottom / 4px 4px;
		clip-path: polygon(100% 55%, 100% 100%, 45% 100%);
	}
</style>
